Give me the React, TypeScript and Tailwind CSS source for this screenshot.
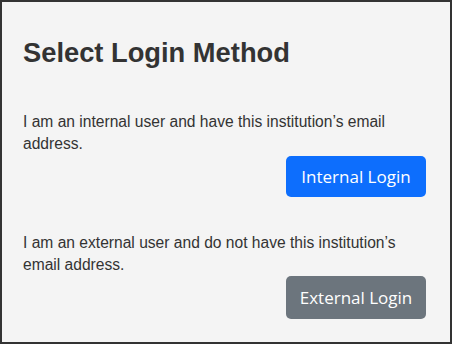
const App = () => {
  return (
    <div className="w-[452px] h-[344px] border-2 border-[#333] bg-[#f4f4f4] text-[#333] font-['Liberation_Sans',Arial,sans-serif]">
      <div className="pl-[21px] pr-[24px] pt-[35px]">
        <h1 className="text-[27.3px] leading-[32px] font-bold">Select Login Method</h1>

        {/* Internal */}
        <p className="mt-[42px] text-[15.6px] leading-[22px]">
          I am an internal user and have this institution’s email address.
        </p>
        <div className="flex justify-end mt-[1px]">
          <button className="w-[140px] h-[41px] rounded-[5px] bg-[#0d6efd] text-white text-[17px] font-['Open_Sans',sans-serif]">
            Internal Login
          </button>
        </div>

        {/* External */}
        <p className="mt-[35px] text-[15.6px] leading-[22px]">
          I am an external user and do not have this institution’s email address.
        </p>
        <div className="flex justify-end">
          <button className="w-[140px] h-[43px] rounded-[5px] bg-[#6c757d] text-white text-[17px] font-['Open_Sans',sans-serif]">
            External Login
          </button>
        </div>
      </div>
    </div>
  );
};

export default App;
